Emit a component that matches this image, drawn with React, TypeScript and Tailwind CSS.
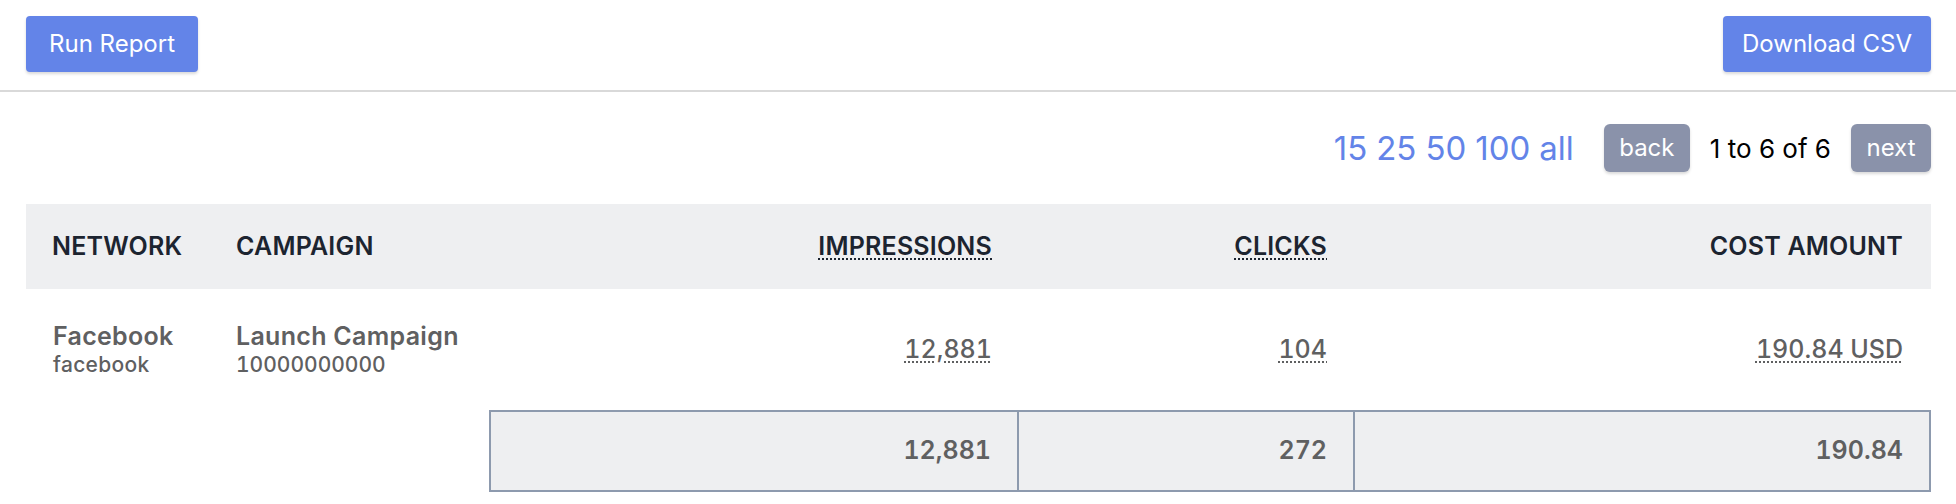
import React from "react";

export default function App() {
  const head = "flex h-[85px] items-center bg-[#eeeff1] text-[25px] font-semibold tracking-[0.2px] text-[#1c2430]";
  const num = "flex h-[121px] items-center justify-end text-[25px] font-medium tabular-nums text-[#5f6061]";
  const tot = "flex h-[82px] items-center justify-end border-[#8d9aae] bg-[#eeeff1] text-[25px] font-semibold tabular-nums text-[#5f6061]";
  return (
    <div className="w-[1956px] h-[504px] bg-white font-['Inter','Noto_Sans',sans-serif]">
      {/* Top bar */}
      <div className="flex h-[92px] items-start justify-between border-b-2 border-[#d9d9d9] pl-[26px] pr-[25px] pt-[16px]">
        <button className="h-[56px] w-[172px] rounded-[4px] bg-[#6384e8] text-[24px] text-white shadow-[0_2px_3px_rgba(0,0,0,0.15)]">
          Run Report
        </button>
        <button className="h-[56px] w-[208px] rounded-[4px] bg-[#6384e8] text-[24px] text-white shadow-[0_2px_3px_rgba(0,0,0,0.15)]">
          Download CSV
        </button>
      </div>

      {/* Pagination */}
      <div className="flex h-[112px] items-center justify-end pr-[25px]">
        <div className="flex gap-[9px] text-[33px] leading-none text-[#6384e8]">
          <span>15</span>
          <span>25</span>
          <span>50</span>
          <span>100</span>
          <span>all</span>
        </div>
        <button className="ml-[30px] h-[48px] w-[86px] rounded-[6px] bg-[#8a92aa] text-[24px] text-white shadow-[0_2px_3px_rgba(0,0,0,0.15)]">
          back
        </button>
        <span className="mx-[20px] text-[26px] text-black">1 to 6 of 6</span>
        <button className="h-[48px] w-[80px] rounded-[6px] bg-[#8a92aa] text-[24px] text-white shadow-[0_2px_3px_rgba(0,0,0,0.15)]">
          next
        </button>
      </div>

      {/* Table */}
      <div className="ml-[26px] mr-[25px] grid grid-cols-[184px_279px_530px_336px_1fr]">
        {/* header */}
        <div className={`${head} pl-[26px]`}>NETWORK</div>
        <div className={`${head} pl-[26px]`}>CAMPAIGN</div>
        <div className={`${head} justify-end pr-[27px]`}>
          <span className="underline decoration-dotted decoration-[2px] underline-offset-[4px]">IMPRESSIONS</span>
        </div>
        <div className={`${head} justify-end pr-[28px]`}>
          <span className="underline decoration-dotted decoration-[2px] underline-offset-[4px]">CLICKS</span>
        </div>
        <div className={`${head} justify-end pr-[28px]`}>COST AMOUNT</div>

        {/* data row */}
        <div className="flex h-[121px] flex-col justify-center pl-[27px] text-[#5f6061]">
          <span className="text-[25px] font-semibold leading-[31px] tracking-[0.3px]">Facebook</span>
          <span className="text-[21px] font-medium leading-[26px] tracking-[0.3px]">facebook</span>
        </div>
        <div className="flex h-[121px] flex-col justify-center pl-[26px] text-[#5f6061]">
          <span className="text-[25px] font-semibold leading-[31px] tracking-[0.3px]">Launch Campaign</span>
          <span className="text-[21px] font-medium leading-[26px] tabular-nums">10000000000</span>
        </div>
        <div className={`${num} pr-[27px]`}>
          <span className="underline decoration-dotted decoration-[2px] underline-offset-[4px]">12,881</span>
        </div>
        <div className={`${num} pr-[28px]`}>
          <span className="underline decoration-dotted decoration-[2px] underline-offset-[4px]">104</span>
        </div>
        <div className={`${num} pr-[28px]`}>
          <span className="underline decoration-dotted decoration-[2px] underline-offset-[4px]">190.84 USD</span>
        </div>

        {/* totals row */}
        <div />
        <div />
        <div className={`${tot} border-2 pr-[26px]`}>12,881</div>
        <div className={`${tot} border-y-2 border-r-2 pr-[26px]`}>272</div>
        <div className={`${tot} border-y-2 border-r-2 pr-[26px]`}>190.84</div>
      </div>
    </div>
  );
}
